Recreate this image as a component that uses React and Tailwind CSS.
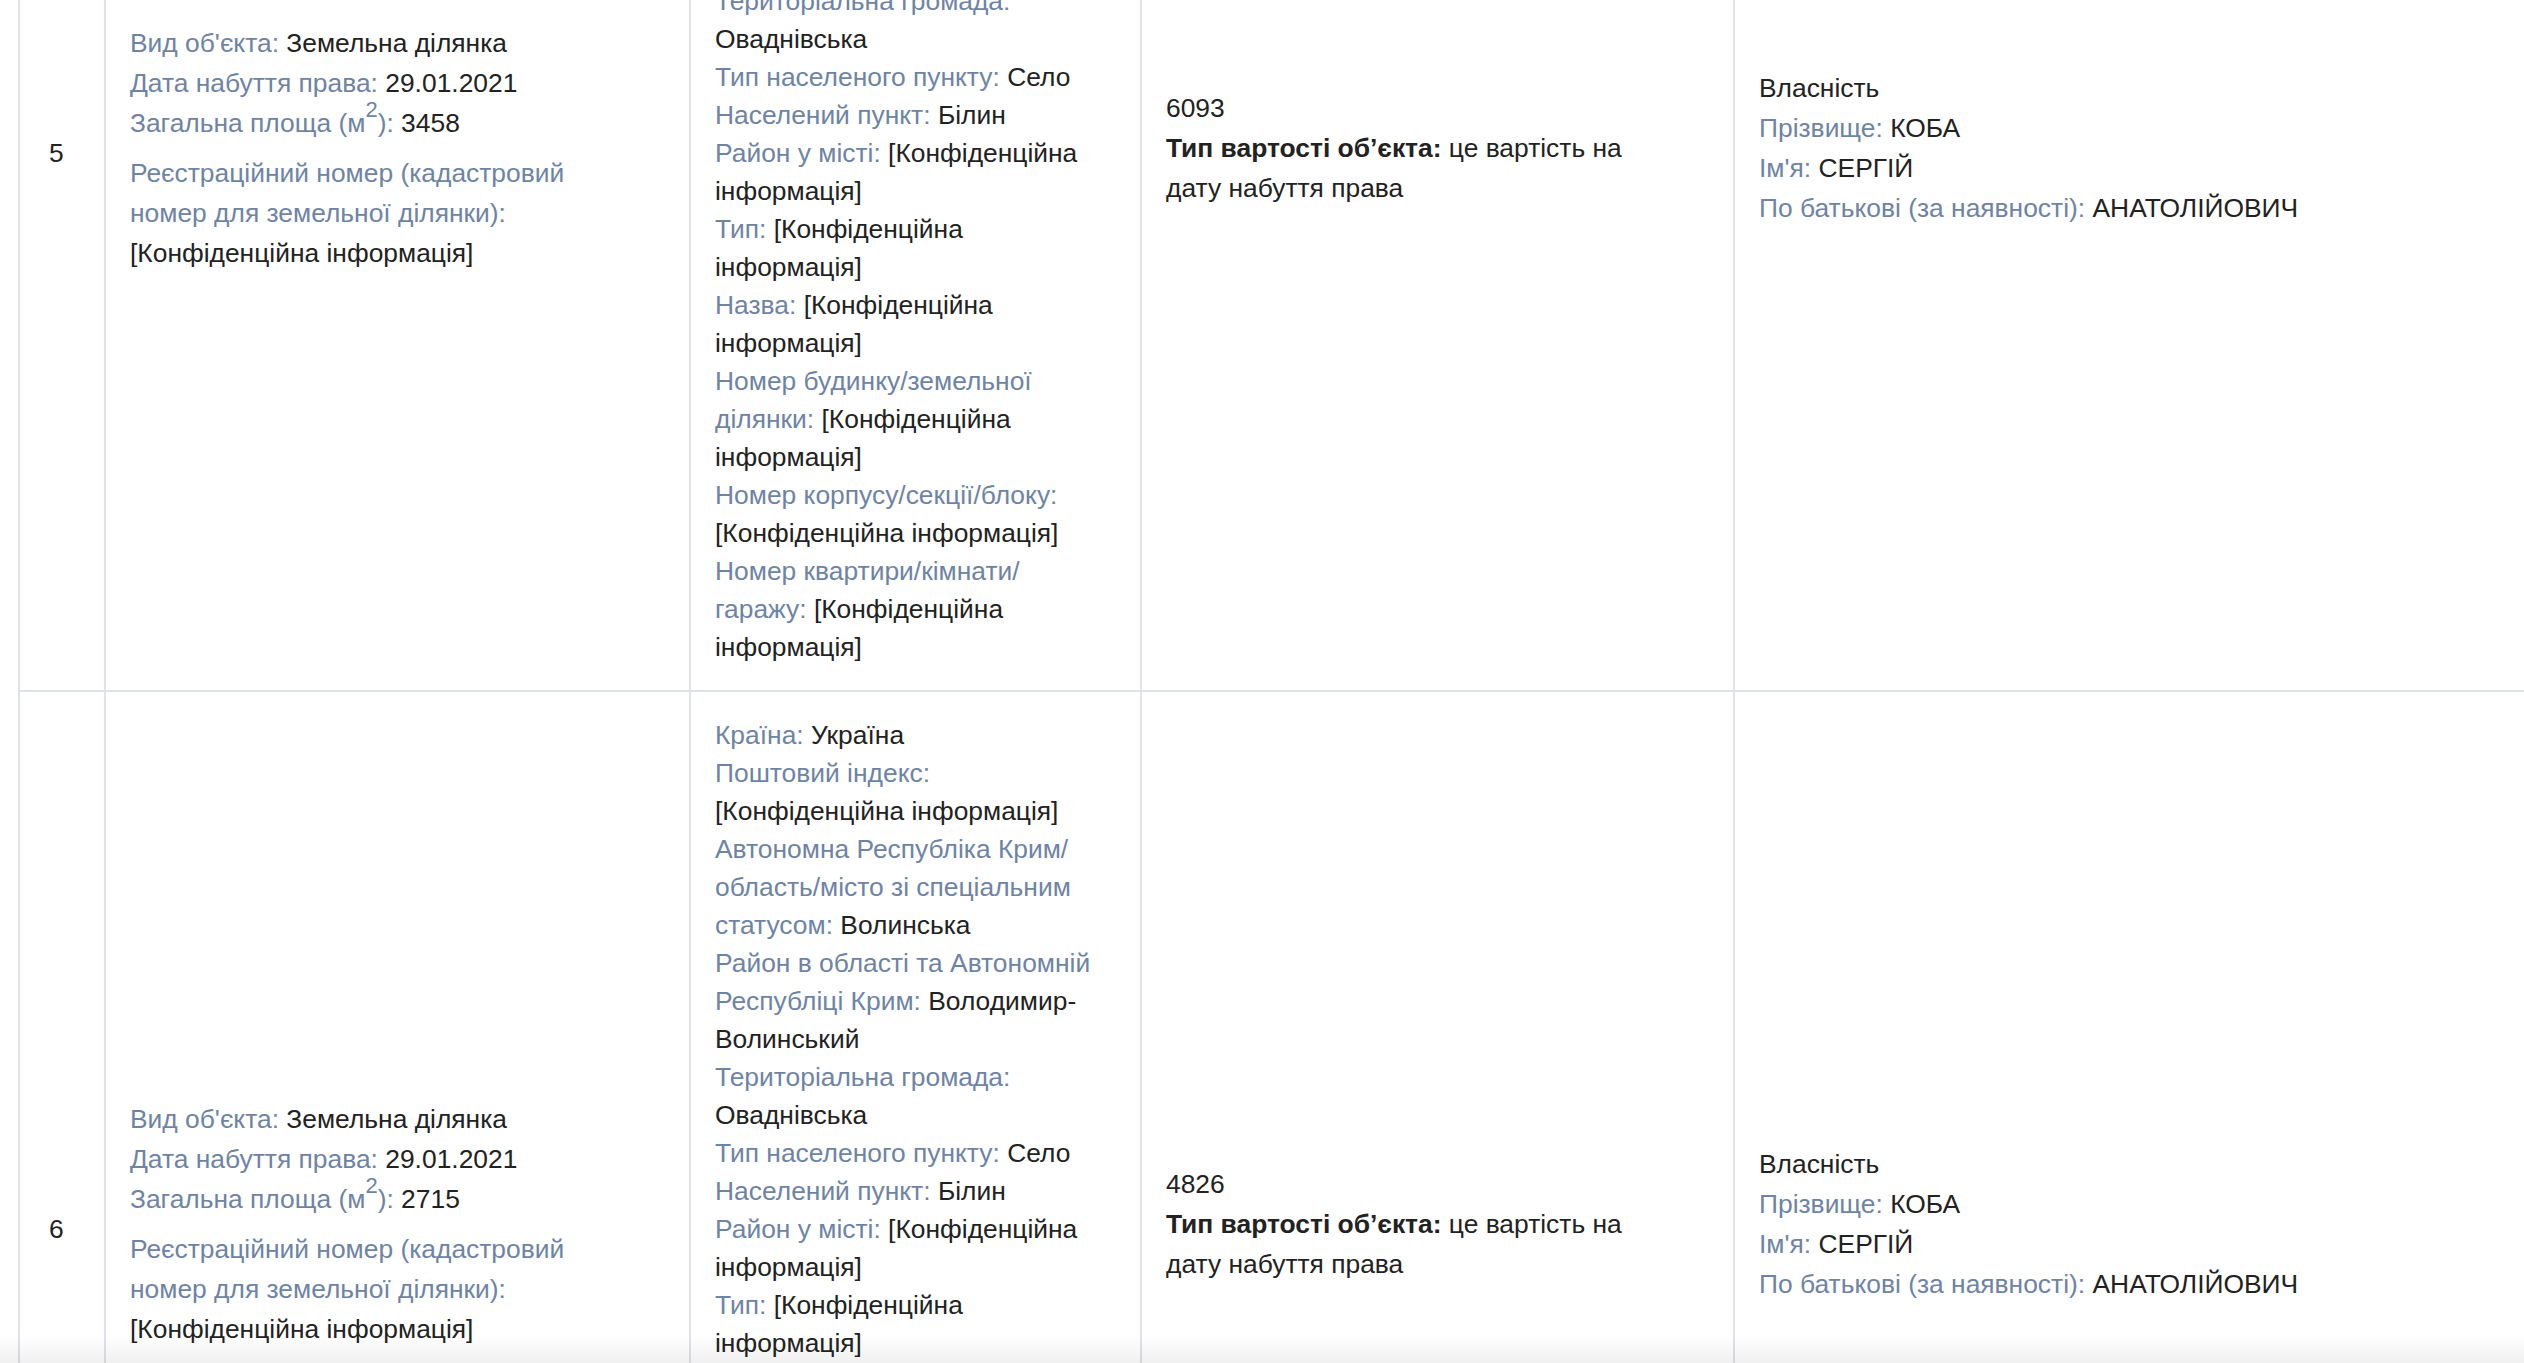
import React from 'react';

const CONF = '[Конфіденційна інформація]';

const address = [
    ['Країна:', 'Україна'],
    ['Поштовий індекс:', CONF],
    ['Автономна Республіка Крим/область/місто зі спеціальним статусом:', 'Волинська'],
    ['Район в області та Автономній Республіці Крим:', 'Володимир-Волинський'],
    ['Територіальна громада:', 'Оваднівська'],
    ['Тип населеного пункту:', 'Село'],
    ['Населений пункт:', 'Білин'],
    ['Район у місті:', CONF],
    ['Тип:', CONF],
    ['Назва:', CONF],
    ['Номер будинку/земельної ділянки:', CONF],
    ['Номер корпусу/секції/блоку:', CONF],
    ['Номер квартири/кімнати/гаражу:', CONF],
];

const rows = [
    { n: 5, area: '3458', cost: '6093' },
    { n: 6, area: '2715', cost: '4826' },
];

const Label = ({ children }) => <span className="text-[#6d84a6]">{children}</span>;

const cell = 'border-r-2 border-[#dfe2e8] flex flex-col justify-center py-[24px] px-[24px]';

const Row = ({ row }) => (
    <div className="grid grid-cols-[86px_585px_451px_593px_1fr] border-b-2 border-[#dfe2e8]">
        <div className={`${cell} pl-[29px]`}>{row.n}</div>

        <div className={cell}>
            <div className="max-w-[470px]">
                <div className="mb-[10px]">
                    <div>
                        <Label>Вид об'єкта:</Label> Земельна ділянка
                    </div>
                    <div>
                        <Label>Дата набуття права:</Label> 29.01.2021
                    </div>
                    <div>
                        <Label>
                            Загальна площа (м<sup className="text-[22px] top-[-15px]">2</sup>):
                        </Label>{' '}
                        {row.area}
                    </div>
                </div>
                <div className="mb-[10px]">
                    <Label>Реєстраційний номер (кадастровий номер для земельної ділянки):</Label> {CONF}
                </div>
            </div>
        </div>

        <div className={`${cell} leading-[38px]`}>
            <div className="max-w-[380px]">
                {address.map(([label, value]) => (
                    <div key={label}>
                        <Label>{label}</Label> {value}
                    </div>
                ))}
            </div>
        </div>

        <div className={cell}>
            <div className="mb-[10px] max-w-[475px]">
                <div>{row.cost}</div>
                <div>
                    <span className="font-bold">Тип вартості об’єкта:</span> це вартість на дату набуття права
                </div>
            </div>
        </div>

        <div className="flex flex-col justify-center py-[24px] px-[24px]">
            <div className="mb-[10px]">
                <div>Власність</div>
                <div>
                    <Label>Прізвище:</Label> КОБА
                </div>
                <div>
                    <Label>Ім'я:</Label> СЕРГІЙ
                </div>
                <div>
                    <Label>По батькові (за наявності):</Label> АНАТОЛІЙОВИЧ
                </div>
            </div>
        </div>
    </div>
);

export default function App() {
    return (
        <div className="relative h-[1363px] w-[2524px] overflow-hidden bg-white font-['Liberation_Sans',Arial,sans-serif] text-[26.4px] leading-[40px] text-[#222222]">
            <div className="ml-[18px] mt-[-386px] w-[2700px] border-l-2 border-t-2 border-[#dfe2e8]">
                {rows.map((row) => (
                    <Row key={row.n} row={row} />
                ))}
            </div>
            <div className="pointer-events-none absolute inset-x-0 bottom-0 h-[28px] bg-gradient-to-b from-white/0 to-black/[0.06]" />
        </div>
    );
}
